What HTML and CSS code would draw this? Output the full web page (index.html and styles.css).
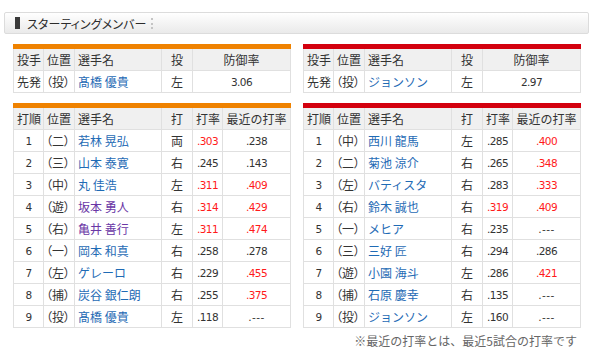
FILE: index.html
```html
<!DOCTYPE html>
<html lang="ja">
<head>
<meta charset="utf-8">
<link rel="stylesheet" href="styles.css">
</head>
<body>
<div class="page">
  <div class="title"><span class="mark"></span><span class="title-text">スターティングメンバー</span><span class="sep"></span></div>
  <div class="teams">
    <div class="team team-g">
      <table class="tbl pitcher">
        <colgroup><col class="c1"><col class="c2"><col class="c3"><col class="c4"><col class="c5p"></colgroup>
        <tr class="head"><th class="l">投手</th><th class="l">位置</th><th class="l">選手名</th><th>投</th><th>防御率</th></tr>
        <tr><td class="l">先発</td><td class="l pos">（投）</td><td class="l"><span class="name">髙橋 優貴</span></td><td>左</td><td class="num">3.06</td></tr>
      </table>
      <table class="tbl lineup">
        <colgroup><col class="c1"><col class="c2"><col class="c3"><col class="c4"><col class="c5"><col class="c6"></colgroup>
        <tr class="head"><th class="l">打順</th><th class="l">位置</th><th class="l">選手名</th><th>打</th><th>打率</th><th>最近の打率</th></tr>
        <tr><td class="num">1</td><td class="l pos">（二）</td><td class="l"><span class="name">若林 晃弘</span></td><td>両</td><td class="num red">.303</td><td class="num">.238</td></tr>
        <tr><td class="num">2</td><td class="l pos">（三）</td><td class="l"><span class="name">山本 泰寛</span></td><td>右</td><td class="num">.245</td><td class="num">.143</td></tr>
        <tr><td class="num">3</td><td class="l pos">（中）</td><td class="l"><span class="name">丸 佳浩</span></td><td>左</td><td class="num red">.311</td><td class="num red">.409</td></tr>
        <tr><td class="num">4</td><td class="l pos">（遊）</td><td class="l"><span class="name visited">坂本 勇人</span></td><td>右</td><td class="num red">.314</td><td class="num red">.429</td></tr>
        <tr><td class="num">5</td><td class="l pos">（右）</td><td class="l"><span class="name visited">亀井 善行</span></td><td>左</td><td class="num red">.311</td><td class="num red">.474</td></tr>
        <tr><td class="num">6</td><td class="l pos">（一）</td><td class="l"><span class="name">岡本 和真</span></td><td>右</td><td class="num">.258</td><td class="num">.278</td></tr>
        <tr><td class="num">7</td><td class="l pos">（左）</td><td class="l"><span class="name">ゲレーロ</span></td><td>右</td><td class="num">.229</td><td class="num red">.455</td></tr>
        <tr><td class="num">8</td><td class="l pos">（捕）</td><td class="l"><span class="name">炭谷 銀仁朗</span></td><td>右</td><td class="num">.255</td><td class="num red">.375</td></tr>
        <tr><td class="num">9</td><td class="l pos">（投）</td><td class="l"><span class="name">髙橋 優貴</span></td><td>左</td><td class="num">.118</td><td class="num dash">.---</td></tr>
      </table>
    </div>
    <div class="team team-d">
      <table class="tbl pitcher">
        <colgroup><col class="c1"><col class="c2"><col class="c3"><col class="c4"><col class="c5p"></colgroup>
        <tr class="head"><th class="l">投手</th><th class="l">位置</th><th class="l">選手名</th><th>投</th><th>防御率</th></tr>
        <tr><td class="l">先発</td><td class="l pos">（投）</td><td class="l"><span class="name">ジョンソン</span></td><td>左</td><td class="num">2.97</td></tr>
      </table>
      <table class="tbl lineup">
        <colgroup><col class="c1"><col class="c2"><col class="c3"><col class="c4"><col class="c5"><col class="c6"></colgroup>
        <tr class="head"><th class="l">打順</th><th class="l">位置</th><th class="l">選手名</th><th>打</th><th>打率</th><th>最近の打率</th></tr>
        <tr><td class="num">1</td><td class="l pos">（中）</td><td class="l"><span class="name">西川 龍馬</span></td><td>左</td><td class="num">.285</td><td class="num red">.400</td></tr>
        <tr><td class="num">2</td><td class="l pos">（二）</td><td class="l"><span class="name">菊池 涼介</span></td><td>右</td><td class="num">.265</td><td class="num red">.348</td></tr>
        <tr><td class="num">3</td><td class="l pos">（左）</td><td class="l"><span class="name">バティスタ</span></td><td>右</td><td class="num">.283</td><td class="num red">.333</td></tr>
        <tr><td class="num">4</td><td class="l pos">（右）</td><td class="l"><span class="name">鈴木 誠也</span></td><td>右</td><td class="num red">.319</td><td class="num red">.409</td></tr>
        <tr><td class="num">5</td><td class="l pos">（一）</td><td class="l"><span class="name">メヒア</span></td><td>右</td><td class="num">.235</td><td class="num dash">.---</td></tr>
        <tr><td class="num">6</td><td class="l pos">（三）</td><td class="l"><span class="name">三好 匠</span></td><td>右</td><td class="num">.294</td><td class="num">.286</td></tr>
        <tr><td class="num">7</td><td class="l pos">（遊）</td><td class="l"><span class="name">小園 海斗</span></td><td>左</td><td class="num">.286</td><td class="num red">.421</td></tr>
        <tr><td class="num">8</td><td class="l pos">（捕）</td><td class="l"><span class="name">石原 慶幸</span></td><td>右</td><td class="num">.135</td><td class="num dash">.---</td></tr>
        <tr><td class="num">9</td><td class="l pos">（投）</td><td class="l"><span class="name">ジョンソン</span></td><td>左</td><td class="num">.160</td><td class="num dash">.---</td></tr>
      </table>
      <p class="note">※最近の打率とは、最近5試合の打率です</p>
    </div>
  </div>
</div>
</body>
</html>
```
FILE: styles.css
```css
html, body {
  margin: 0;
  padding: 0;
  background: #ffffff;
}
body {
  font-family: "Noto Sans CJK JP", "Liberation Sans", sans-serif;
  color: #333333;
  font-size: 12px;
}
.page {
  padding: 12px 0 0 4px;
  width: 585px;
}
.title {
  box-sizing: border-box;
  height: 22px;
  border: 1px solid #dcdcdc;
  border-radius: 2px;
  background: linear-gradient(#ffffff, #f4f4f4 50%, #eaeaea);
  display: flex;
  align-items: center;
  padding-left: 10px;
}
.mark {
  width: 5px;
  height: 12px;
  background: #3a3a3a;
  margin-right: 7px;
}
.title-text {
  font-size: 12px;
  font-feature-settings: "palt";
  color: #2b2b2b;
  letter-spacing: 0.1px;
}
.sep {
  width: 0;
  height: 11px;
  border-left: 2px dotted #c4c4c4;
  margin-left: 5px;
}
.teams {
  display: grid;
  grid-template-columns: 277px 277px;
  column-gap: 13px;
  padding-left: 9px;
  margin-top: 10px;
}
.team {
  display: flex;
  flex-direction: column;
  gap: 10px;
}
.tbl {
  border-collapse: collapse;
  table-layout: fixed;
  width: 277px;
}
.team-g .tbl { border-top: 5px solid #ef8200; }
.team-d .tbl { border-top: 5px solid #d3000e; }
.tbl th, .tbl td {
  border: 1px solid #e0e0e0;
  height: 21px;
  padding: 0 3px;
  font-weight: normal;
  text-align: center;
  white-space: nowrap;
  line-height: 14px;
}
.tbl .head th { background: #f0f0f0; }
.tbl .l { text-align: left; }
.tbl .pos {
  padding-left: 2px;
  font-feature-settings: "palt";
}
.c1 { width: 30px; }
.c2 { width: 31px; }
.c3 { width: 87px; }
.c4 { width: 31px; }
.c5 { width: 30px; }
.c6 { width: 68px; }
.c5p { width: 98px; }
.name { color: #1f6bb5; }
.name.visited { color: #6a37a6; }
.num {
  font-family: "DejaVu Sans", sans-serif;
  font-size: 10.5px;
  letter-spacing: -0.6px;
}
.dash { letter-spacing: 0.4px; }
.red { color: #ff1a1a; }
.note {
  margin: -6px 0 0;
  text-align: right;
  padding-right: 3px;
  color: #666666;
  font-size: 12px;
  line-height: 18px;
}
```
